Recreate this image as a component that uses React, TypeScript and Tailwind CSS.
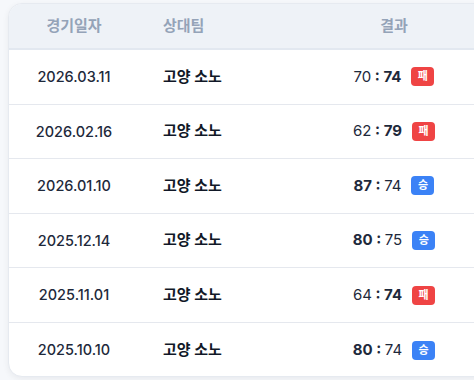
import React from "react";

type Game = {
	date: string;
	team: string;
	home: number;
	away: number;
};

const games: Game[] = [
	{ date: "2026.03.11", team: "고양 소노", home: 70, away: 74 },
	{ date: "2026.02.16", team: "고양 소노", home: 62, away: 79 },
	{ date: "2026.01.10", team: "고양 소노", home: 87, away: 74 },
	{ date: "2025.12.14", team: "고양 소노", home: 80, away: 75 },
	{ date: "2025.11.01", team: "고양 소노", home: 64, away: 74 },
	{ date: "2025.10.10", team: "고양 소노", home: 80, away: 74 },
];

const Badge = ({ win }: { win: boolean }) => (
	<span
		className={
			win
				? "inline-flex items-center justify-center w-[23px] h-[19px] rounded-[4px] bg-[#3b82f6] text-white text-[11px] font-bold leading-none"
				: "inline-flex items-center justify-center w-[23px] h-[19px] rounded-[4px] bg-[#ef4444] text-white text-[11px] font-bold leading-none"
		}
	>
		{win ? "승" : "패"}
	</span>
);

export default function App() {
	return (
		<div
			className="w-[474px] h-[380px] overflow-hidden bg-[#f6f8fb] pl-2 pt-[3px]"
			style={{ fontFamily: 'Inter, "Noto Sans CJK KR", sans-serif' }}
		>
			<div className="w-[490px] h-[374px] bg-white rounded-[14px] border border-[#e6eaf0] shadow-[0_2px_6px_rgba(15,23,42,0.06)] overflow-hidden">
				<div className="flex h-[46px] items-center bg-[#eef2f7] border-b-2 border-[#e2e8f0] text-[15px] font-semibold text-[#94a3b8]">
					<div className="w-[130px] text-center">경기일자</div>
					<div className="w-[174px] pl-6">상대팀</div>
					<div className="w-[162px] text-center">결과</div>
				</div>
				{games.map((g, i) => {
					const win = g.home > g.away;
					return (
						<div
							key={g.date}
							className={
								i < games.length - 1
									? "flex h-[54.6px] items-center border-b border-[#e5e8ee]"
									: "flex h-[54.6px] items-center"
							}
						>
							<div className="w-[130px] text-center text-[14.5px] font-medium text-[#1e293b]">
								{g.date}
							</div>
							<div className="w-[174px] pl-6 text-[15px] font-bold text-[#111827]">
								{g.team}
							</div>
							<div className="w-[162px] flex items-center justify-center gap-[10px]">
								<span className="text-[15px] text-[#1e293b]">
									<span className={win ? "font-bold" : "font-normal"}>{g.home}</span>
									<span className="font-bold"> : </span>
									<span className={win ? "font-normal" : "font-bold"}>{g.away}</span>
								</span>
								<Badge win={win} />
							</div>
						</div>
					);
				})}
			</div>
		</div>
	);
}
